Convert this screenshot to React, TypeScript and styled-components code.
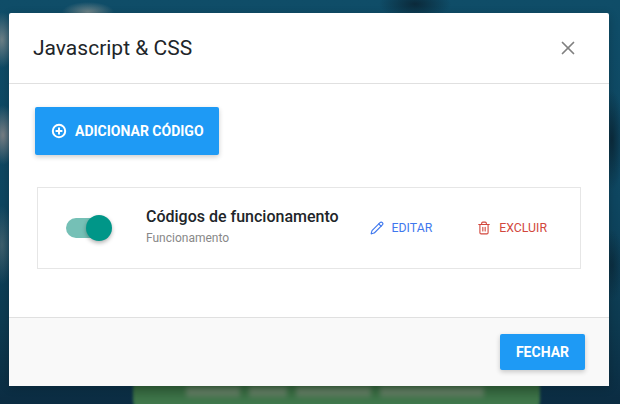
import { FC, ReactNode } from "react";
import styled, { createGlobalStyle } from "styled-components";
import { Pencil, Trash2, X } from "lucide-react";

const GlobalStyle = createGlobalStyle`
  html, body {
    margin: 0;
    padding: 0;
    height: 404px;
    overflow: hidden;
    font-family: Roboto, "Liberation Sans", sans-serif;
  }
`;

type ActionProps = {
  tone: string;
  icon: ReactNode;
  label: string;
};

const Action: FC<ActionProps> = ({ tone, icon, label }) => (
  <ActionButton $tone={tone}>
    {icon}
    {label}
  </ActionButton>
);

const AddIcon = () => (
  <svg width="16" height="16" viewBox="0 0 16 16" fill="none" stroke="#fff" strokeWidth="2">
    <circle cx="8" cy="8" r="6.2" />
    <path d="M8 4.6v6.8M4.6 8h6.8" />
  </svg>
);

export default function App() {
  return (
    <Page>
      <GlobalStyle />
      <GreenBand>
        <BlurredText />
      </GreenBand>
      <Modal>
        <Header>
          <Title>Javascript &amp; CSS</Title>
          <CloseButton>
            <X size={22} strokeWidth={1.9} />
          </CloseButton>
        </Header>
        <Body>
          <AddButton>
            <AddIcon />
            ADICIONAR CÓDIGO
          </AddButton>
          <Item>
            <Toggle>
              <Track />
              <Thumb />
            </Toggle>
            <ItemText>
              <ItemTitle>Códigos de funcionamento</ItemTitle>
              <ItemSub>Funcionamento</ItemSub>
            </ItemText>
            <Actions>
              <Action tone="#3f78ee" icon={<Pencil size={14} strokeWidth={1.9} />} label="EDITAR" />
              <Action tone="#d2473c" icon={<Trash2 size={14} strokeWidth={1.9} />} label="EXCLUIR" />
            </Actions>
          </Item>
        </Body>
        <Footer>
          <CloseAction>FECHAR</CloseAction>
        </Footer>
      </Modal>
    </Page>
  );
}

const Page = styled.div`
  position: relative;
  box-sizing: border-box;
  width: 620px;
  height: 404px;
  padding: 13px 11px 18px 9px;
  overflow: hidden;
  background:
    radial-gradient(ellipse 14px 28px at 2px 40px, rgba(140, 145, 145, 0.75), transparent),
    radial-gradient(ellipse 14px 30px at 3px 135px, rgba(145, 140, 140, 0.8), transparent),
    radial-gradient(ellipse 12px 40px at 2px 245px, rgba(120, 130, 130, 0.45), transparent),
    radial-gradient(ellipse 26px 10px at 88px 12px, rgba(150, 155, 150, 0.7), transparent),
    radial-gradient(ellipse 36px 16px at 415px 4px, rgba(10, 35, 50, 0.85), transparent),
    radial-gradient(ellipse 12px 50px at 612px 140px, rgba(10, 35, 50, 0.8), transparent),
    radial-gradient(ellipse 12px 36px at 612px 265px, rgba(10, 35, 50, 0.6), transparent),
    linear-gradient(180deg, #0f4d68 0%, #0e4660 50%, #0d3a50 80%, #0b2c42 100%);
`;

const GreenBand = styled.div`
  position: absolute;
  left: 133px;
  right: 80px;
  bottom: -10px;
  height: 40px;
  border-radius: 14px;
  background: linear-gradient(180deg, #2b5634 0%, #2f5e38 30%, #3f774b 70%, #41794e 100%);
  filter: blur(1.5px);
`;

const BlurredText = styled.div`
  position: absolute;
  left: 53px;
  right: 56px;
  top: 13px;
  height: 10px;
  background: linear-gradient(
    90deg,
    rgba(140, 140, 130, 0.45) 18%,
    transparent 18% 21%,
    rgba(140, 140, 130, 0.45) 21% 34%,
    transparent 34% 37%,
    rgba(140, 140, 130, 0.45) 37% 62%,
    transparent 62% 65%,
    rgba(140, 140, 130, 0.45) 65%
  );
  filter: blur(2px);
`;

const Modal = styled.div`
  position: relative;
  display: flex;
  flex-direction: column;
  width: 600px;
  height: 373px;
  border-radius: 2px;
  background: #fff;
  box-shadow: 0 2px 10px rgba(0, 0, 0, 0.2);
`;

const Header = styled.div`
  display: flex;
  align-items: center;
  justify-content: space-between;
  box-sizing: border-box;
  height: 71px;
  padding: 0 30px 0 24px;
  border-bottom: 1px solid #e0e0e0;
`;

const Title = styled.h1`
  margin: 0;
  font-size: 21px;
  font-weight: 400;
  color: #212529;
`;

const CloseButton = styled.button`
  display: flex;
  padding: 0;
  border: 0;
  background: none;
  color: #808080;
`;

const Body = styled.div`
  flex: 1;
  display: flex;
  flex-direction: column;
  align-items: flex-start;
  padding: 23px 28px 0 26px;
`;

const AddButton = styled.button`
  display: flex;
  align-items: center;
  gap: 8px;
  width: 184px;
  height: 48px;
  padding: 0 0 0 16px;
  border: 0;
  border-radius: 2px;
  background: #1e9af5;
  box-shadow: 0 2px 5px rgba(0, 0, 0, 0.2);
  font: 700 14px Roboto, sans-serif;
  white-space: nowrap;
  color: #fff;
`;

const Item = styled.div`
  display: flex;
  align-items: center;
  box-sizing: border-box;
  align-self: stretch;
  height: 82px;
  margin: 32px 0 0 2px;
  padding: 0 33px 0 28px;
  border: 1px solid #e6e6e6;
`;

const Toggle = styled.div`
  position: relative;
  width: 46px;
  height: 26px;
  margin-right: 34px;
`;

const Track = styled.div`
  position: absolute;
  left: 0;
  top: 3px;
  width: 40px;
  height: 20px;
  border-radius: 10px;
  background: #75c0b6;
`;

const Thumb = styled.div`
  position: absolute;
  right: 0;
  top: 0;
  width: 26px;
  height: 26px;
  border-radius: 50%;
  background: #009688;
  box-shadow: 0 2px 4px rgba(0, 0, 0, 0.3);
`;

const ItemText = styled.div`
  flex: 1;
  display: flex;
  flex-direction: column;
  gap: 5px;
  margin-bottom: 4px;
`;

const ItemTitle = styled.div`
  font-size: 16px;
  font-weight: 500;
  color: #212529;
`;

const ItemSub = styled.div`
  font-size: 12px;
  color: #888;
`;

const Actions = styled.div`
  display: flex;
  align-items: center;
  gap: 45px;
`;

const ActionButton = styled.button<{ $tone: string }>`
  display: flex;
  align-items: center;
  gap: 8px;
  padding: 0;
  border: 0;
  background: none;
  font: 400 12.3px Roboto, sans-serif;
  color: ${(p) => p.$tone};
`;

const Footer = styled.div`
  display: flex;
  align-items: center;
  justify-content: flex-end;
  box-sizing: border-box;
  height: 69px;
  padding: 0 24px 0 0;
  border-top: 1px solid #e0e0e0;
  background: #f9f9f9;
`;

const CloseAction = styled.button`
  width: 85px;
  height: 36px;
  padding: 0;
  border: 0;
  border-radius: 2px;
  background: #1e9af5;
  box-shadow: 0 2px 5px rgba(0, 0, 0, 0.2);
  font: 700 14px Roboto, sans-serif;
  color: #fff;
`;
